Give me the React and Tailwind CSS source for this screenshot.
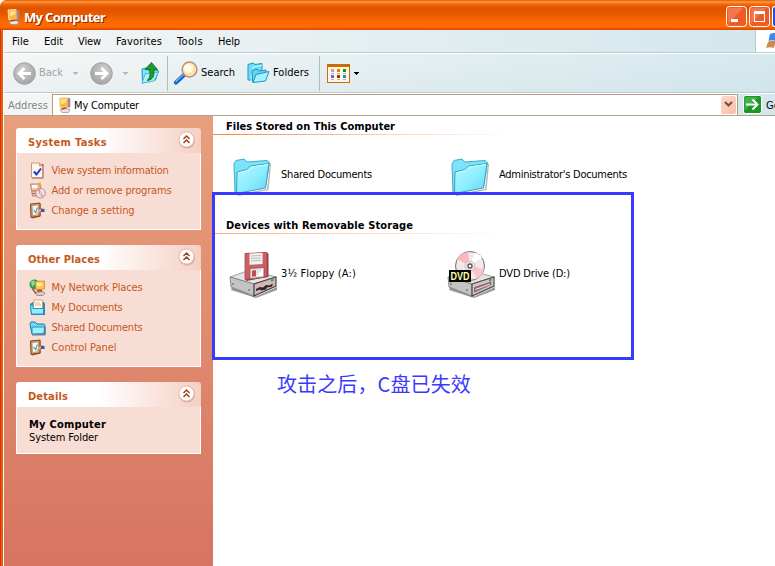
import { useLayoutEffect, useRef, useState } from "react";

// Text whose letter spacing is computed so that the line fills a given width.
function Fit({ w, className = "", children }) {
  const ref = useRef(null);
  const [gap, setGap] = useState(0);
  useLayoutEffect(() => {
    const natural = ref.current.getBoundingClientRect().width;
    setGap((w - natural) / String(children).length);
  }, [w, children]);
  return (
    <span ref={ref} className={"inline-block shrink-0 whitespace-pre " + className} style={{ letterSpacing: gap + "px" }}>
      {children}
    </span>
  );
}

function ComputerIcon() {
  return (
    <svg width="14" height="16" viewBox="0 0 14 16" className="shrink-0">
      <path d="M1 1 9 .5l.5 9.500-7.500 1z" fill="#ffb52e" stroke="#fbe6bd" />
      <path d="M2.500 2.500 8 2v3.500l-5 2z" fill="#ffe08a" />
      <path d="M9.500.500l2.800 1v8.500l-2.800 1z" fill="#a9877d" />
      <path d="M2 13l5-1.500 5 1-1.500 3H4z" fill="#e8e2ea" stroke="#9b8d99" strokeWidth=".7" />
      <path d="M3.500 11.700l5-.7" stroke="#b43c27" strokeWidth="1.600" />
    </svg>
  );
}

function RoundArrow({ flip }) {
  return (
    <svg width="23" height="23" viewBox="0 0 23 23" className={flip ? "shrink-0 -scale-x-100" : "shrink-0"}>
      <defs>
        <radialGradient id={flip ? "rf" : "rb"} cx=".4" cy=".35" r=".7">
          <stop offset="0" stopColor="#d2d2d2" />
          <stop offset="1" stopColor="#a2a2a2" />
        </radialGradient>
      </defs>
      <circle cx="11.5" cy="11.5" r="10.8" fill={flip ? "url(#rf)" : "url(#rb)"} stroke="#a0a0a0" />
      <path d="M18 11.500H6.500M11.500 6l-5.500 5.500 5.500 5.500" fill="none" stroke="#fff" strokeWidth="2.800" />
    </svg>
  );
}

function Caret({ className }) {
  return (
    <svg width="6" height="3" viewBox="0 0 6 3" className={"shrink-0 " + className} shapeRendering="crispEdges">
      <path d="M0 0h6L3 3z" fill="currentColor" />
    </svg>
  );
}

function UpIcon() {
  return (
    <svg width="20" height="23" viewBox="0 0 20 23" className="ml-[12px] shrink-0">
      <path d="M2 7l4-1 1.500 2H16l2.500 1-3 9-13 3z" fill="#7be3fb" stroke="#2393bd" />
      <path d="M2 21 5 12l13.500-2-4.500 9z" fill="#aef3ff" stroke="#39afd5" strokeWidth=".8" />
      <path d="M5 7.500 11.500.500 17.500 7.500h-3.500c.5 6.500-1 10.500-7 11 3-2.500 3.500-5.500 2.500-11z" fill="#1d9c2d" stroke="#08671a" strokeWidth=".8" />
    </svg>
  );
}

function SearchIcon() {
  return (
    <svg width="24" height="24" viewBox="0 0 24 24" className="ml-[6px] shrink-0">
      <path d="M2 21.500 10 14" stroke="#1c5fc4" strokeWidth="4.200" strokeLinecap="round" />
      <path d="M2 20.500 9 14" stroke="#6cb3ff" strokeWidth="1.600" strokeLinecap="round" />
      <circle cx="15.500" cy="8.500" r="7.400" fill="#ffe3a8" stroke="#b59089" strokeWidth="1.500" />
      <circle cx="14.500" cy="7.500" r="4.600" fill="#fffbe6" />
    </svg>
  );
}

function FoldersIcon() {
  return (
    <svg width="23" height="22" viewBox="0 0 23 22" className="ml-[12px] shrink-0">
      <path d="M1 2.500 6 1l2 1.500 7-1v6L4 18H1z" fill="#6fdcf8" stroke="#2192c0" />
      <path d="M4 18 6 5l9-1.500" fill="none" stroke="#c8f8ff" />
      <path d="M5 8.500l5-1.500 2 2 7-1v3L8 20H5.500z" fill="#62d2f3" stroke="#2192c0" />
      <path d="M6 20.500 9 12.500l13-3L18.500 19z" fill="#a5f0ff" stroke="#2496c4" />
    </svg>
  );
}

function ViewsIcon() {
  return (
    <svg width="23" height="19" viewBox="0 0 23 19" className="ml-[7px] shrink-0" shapeRendering="crispEdges">
      <path d="M0 0h23v19H0z" fill="#cf6a06" />
      <path d="M1 3h21v15H1z" fill="#fff7ea" />
      <path d="M4 5h3v3H4z" fill="#d39a9a" />
      <path d="M10 5h3v3h-3z" fill="#e67c00" />
      <path d="M16 5h3v3h-3z" fill="#0a9a0a" />
      <path d="M4 11h3v3H4z" fill="#4a6cff" />
      <path d="M10 11h3v3h-3z" fill="#9a3400" />
      <path d="M16 11h3v3h-3z" fill="#0a9ad0" />
      <path d="M4 9h3v1H4zM10 9h3v1h-3zM16 9h3v1h-3zM4 15h3v1H4zM10 15h3v1h-3zM16 15h3v1h-3z" fill="#b9b2a8" />
    </svg>
  );
}

function TaskIcon({ name }) {
  return (
    <svg width="17" height="17" viewBox="0 0 17 17" className="shrink-0">
      {name === "info" && (
        <g>
          <path d="M4 2h10.500v14.500H3V15z" fill="#8a5f4c" />
          <path d="M2.500 1h8l3 3v11.500h-11z" fill="#fff5e8" stroke="#c99a72" />
          <path d="M10.500 1v3h3" fill="#f0b070" stroke="#c58a50" strokeWidth=".7" />
          <path d="M5 9.500l2.500 3L12 6.500" fill="none" stroke="#1736e8" strokeWidth="2" />
        </g>
      )}
      {name === "programs" && (
        <g>
          <path d="M1.500 2h8l2 2v10h-8z" fill="#efc79f" stroke="#a27a69" strokeWidth=".8" />
          <path d="M3 3h5v3H3z" fill="#fff" />
          <path d="M3 8.500h5v1H3zM3 11h4v1H3z" fill="#b2685a" />
          <path d="M9 1l2.500-.5 1 4-2 1z" fill="#f0a030" />
          <circle cx="11.500" cy="11.200" r="4.800" fill="#f5e3e7" stroke="#9b7980" strokeWidth=".8" />
          <path d="M11.500 11.200 8 8a5 5 0 0 1 3-1.500z" fill="#f08a96" />
          <path d="M11.500 11.200 15 14a5 5 0 0 1-3 1.800z" fill="#f3a0a8" />
          <circle cx="11.500" cy="11.200" r="1.200" fill="#fff" stroke="#9b7980" strokeWidth=".6" />
        </g>
      )}
      {name === "setting" && (
        <g>
          <path d="M2.500 3l9-1.500v13L3 16.500z" fill="#7b5138" />
          <path d="M1.500 2l9.500-1v13l-9 1.500z" fill="#d99458" stroke="#7b4a2b" />
          <path d="M3.500 4l5.500-.6v8.800l-5 .8z" fill="#e9faff" />
          <path d="M4.500 8l2 2.500 2-5" fill="none" stroke="#3aa2b8" strokeWidth="1.100" />
          <path d="M7.500 11.500l3.500-3 2-.5" fill="none" stroke="#eab088" strokeWidth="2" />
          <path d="M12 6.500l3.500.500v3H12z" fill="#3d55a6" />
        </g>
      )}
      {name === "network" && (
        <g>
          <circle cx="5.500" cy="5.500" r="5" fill="#2c9c4c" />
          <path d="M2 3l3-2 1 4-3 3z" fill="#8de08a" />
          <path d="M6.500 2.500l9-.5v8l-8.500.7z" fill="#ffc74c" stroke="#d59a35" />
          <path d="M8 4l5-.3v3L8 7.500z" fill="#ffeaa8" />
          <path d="M8 11l5-.3v2H8z" fill="#a54432" />
          <path d="M6 13.500l8-1 2 1.500-2 2.500H8z" fill="#d8cbd4" stroke="#8b7280" strokeWidth=".7" />
          <path d="M3.500 10l3.500 4.500" stroke="#c64334" strokeWidth="1.300" />
        </g>
      )}
      {name === "docs" && (
        <g>
          <path d="M1 5l3-2h11l1 2v11H2z" fill="#2887b4" />
          <path d="M5 1h8.500v9H4z" fill="#fffaf0" stroke="#c8935f" strokeWidth=".8" />
          <path d="M6 4h5M6 6h6" stroke="#e1a070" strokeWidth=".8" />
          <path d="M1.500 6H4v3.500h10.500V15h-12z" fill="#93edff" stroke="#2796c5" />
        </g>
      )}
      {name === "folder" && (
        <g>
          <path d="M1 5l1-2h4l2 2h7l1 1.500V15H3z" fill="#6fd9f5" stroke="#1a79a8" />
          <path d="M3 15V8h12.500l-.5 6.500z" fill="#9ff0ff" stroke="#2591c1" />
          <path d="M3 16h13V8" fill="none" stroke="#56616a" strokeWidth=".8" />
        </g>
      )}
    </svg>
  );
}

function Panel({ title, tw, height, children }) {
  return (
    <section className={"flex w-[185px] shrink-0 flex-col " + height}>
      <header className="flex h-[25px] shrink-0 items-center justify-between rounded-t-[3px] bg-linear-to-r from-white from-45% to-[#f5cfc3] pr-[6px] pl-3">
        <Fit w={tw} className="pt-[4px] text-[11px] leading-[14px] font-bold text-[#c6581c]">{title}</Fit>
        <svg width="17" height="17" viewBox="0 0 17 17" className="-mt-[2px] overflow-visible">
          <circle cx="9" cy="9.500" r="8" fill="#c98878" opacity=".5" />
          <circle cx="8.500" cy="8.500" r="7.600" fill="#fff" stroke="#e1b5a8" />
          <path d="M5.500 8l3-3 3 3M5.500 12l3-3 3 3" fill="none" stroke="#a5400c" strokeWidth="1.500" />
        </svg>
      </header>
      <div className="flex flex-1 flex-col border border-t-0 border-white bg-[#f8ddd4]">{children}</div>
    </section>
  );
}

function Task({ icon, w, children }) {
  return (
    <div className="flex h-5 items-center gap-[6px] pl-[11.5px]">
      <TaskIcon name={icon} />
      <Fit w={w} className="pt-[2px] text-[11px] leading-[14px] text-[#c6581c]">{children}</Fit>
    </div>
  );
}

function BigFolder() {
  return (
    <svg width="40" height="38" viewBox="0 0 40 38" className="mt-[4px] ml-[3px] shrink-0">
      <defs>
        <linearGradient id="bf" x1="0" y1="0" x2="1" y2="1">
          <stop offset="0" stopColor="#b8faff" />
          <stop offset=".55" stopColor="#8bedff" />
          <stop offset="1" stopColor="#5fd2f6" />
        </linearGradient>
      </defs>
      <path d="M5 36.500 34 31l3-25.500 1 .5-2.500 26L5 38z" fill="#777" opacity=".55" />
      <path d="M1 6 3 2.500 11 1l3 3L34 2.500l2.500 2-4 24-28 7-2.500-1z" fill="#7ce4fa" stroke="#3cacc9" />
      <path d="M3.500 35.500 4 14l10-2.500 3.500-3.500L36 5.500 32.500 30z" fill="url(#bf)" stroke="#36a2c4" />
      <path d="M5 15l10-2.500L18.500 9 35 6.500" fill="none" stroke="#d7fcff" />
    </svg>
  );
}

function DriveBase({ red }) {
  return (
    <g>
      <path d="M3 37l24 9.500L48 37v3L27 48 2 40z" fill="#555" opacity=".6" />
      <path d="M1 27 21 20l26 7-22 7z" fill="#e4e4e4" stroke="#8c8c8c" strokeWidth=".8" />
      <path d="M1 27l24 7v12L2 37z" fill="#c4c4c4" stroke="#777" strokeWidth=".8" />
      <path d="M25 34l22-7v9l-22 10z" fill={red ? "#d8b4b4" : "#cfc3c3"} stroke="#494949" strokeWidth="1.200" />
      {red && <path d="M27 39l4-2 3 .5 3-2.500 3 .5 4-2-1 3-5 1-1 2-5 1-1-1-4 1.500z" fill="#2a2626" />}
      {!red && <path d="M27.500 37.500 44 32v2.500L27.500 42z" fill="#a36a6a" stroke="#555" strokeWidth=".6" />}
      {!red && <path d="M28.500 39.500 43 34" stroke="#efdcdc" strokeWidth="1.200" />}
      <path d="M42 29.500l2.500-.7v2l-2.500.7z" fill="#1fa84c" />
      <circle cx="4" cy="34" r=".8" fill="#444" />
      <circle cx="20" cy="40" r=".8" fill="#444" />
    </g>
  );
}

function FloppyDrive() {
  return (
    <svg width="48" height="49" viewBox="0 0 48 49" className="-ml-px shrink-0">
      <DriveBase red />
      <path d="M16 3.500 38 2.500 39.500 4v23L17 31z" fill="#8f3d42" />
      <path d="M16 3.500 38 2.500v24L16 29.500z" fill="#cc5f65" stroke="#a8464d" strokeWidth=".8" />
      <path d="M20.500 3.500l13-.6V14l-13 .8z" fill="#f4f4f4" />
      <path d="M22 6l10-.5M22 8.500l10-.5M22 11l10-.5" stroke="#a8a8a8" strokeWidth=".8" />
      <path d="M21 18.500l14-1v9.500l-14 1.700z" fill="#e5e2e2" stroke="#8b5254" strokeWidth=".7" />
      <path d="M23 20.500l4-.3v6l-4 .5z" fill="#c7484f" />
      <path d="M28 26l6-8v8z" fill="#fff" />
    </svg>
  );
}

function DvdDrive() {
  return (
    <svg width="48" height="49" viewBox="0 0 48 49" className="-ml-px shrink-0">
      <DriveBase />
      <circle cx="23" cy="16" r="14.500" fill="#f3e8eb" stroke="#6e6e6e" />
      <path d="M23 16 10 9A15 15 0 0 1 21 2z" fill="#fbb9b9" />
      <path d="M23 16l14 3a15 15 0 0 1-7 10z" fill="#fac5c5" />
      <path d="M23 16 28 2.500a15 15 0 0 1 7 5z" fill="#fff" />
      <path d="M23 16l-5 13a15 15 0 0 1-7-5z" fill="#f8d6f5" />
      <circle cx="23" cy="16" r="5" fill="#eedfe2" stroke="#ccb5ba" strokeWidth=".7" />
      <circle cx="23" cy="16" r="2" fill="#fff" stroke="#555" strokeWidth="1.300" />
      <path d="M2 20h22v12H2z" fill="#050500" />
      <text x="13" y="29.500" textAnchor="middle" textLength="19" lengthAdjust="spacingAndGlyphs" fontSize="10" fontWeight="bold" fill="#ffffae" fontFamily="Liberation Sans, sans-serif">DVD</text>
    </svg>
  );
}

function Heading({ w, pale, children }) {
  return (
    <div className="flex h-[19px] w-[296px] flex-col">
      <h2 className="h-[18px] pl-[13px] text-[11px] leading-[21px] font-bold">
        <Fit w={w}>{children}</Fit>
      </h2>
      <div className={pale ? "h-px bg-linear-to-r from-[#f9b07c] to-white" : "h-px bg-linear-to-r from-[#f58634] to-white"} />
    </div>
  );
}

function Item({ icon, w, children }) {
  return (
    <div className="flex w-[218px] items-center">
      <div className="flex w-[51px] shrink-0">{icon}</div>
      <Fit w={w}>{children}</Fit>
    </div>
  );
}

export default function App() {
  return (
    <div className="relative flex h-[566px] w-[775px] flex-col overflow-hidden bg-white font-['DejaVu_Sans_Condensed','DejaVu_Sans',sans-serif] text-[11px] leading-[14px] text-black">
      <div className="flex h-[30px] shrink-0 items-center rounded-tl-[6px] bg-[linear-gradient(#e35a00_0px,#ff9a45_2px,#f06a0a_4px,#df5200_8px,#e85b00_15px,#ff6a00_22px,#ff6b00_27px,#dc4200_30px)] pt-[3px] pl-[7px]">
        <ComputerIcon />
        <Fit w={81} className="ml-[3px] font-['Open_Sans',sans-serif] text-[13px] leading-[18px] font-bold text-white [text-shadow:1px_1px_#8c2b00]">My Computer</Fit>
        <div className="ml-auto flex shrink-0 gap-[2px]">
          <svg width="21" height="21" viewBox="0 0 21 21">
            <rect x=".5" y=".5" width="20" height="20" rx="3" fill="#ef5b28" stroke="#fff" />
            <path d="M2 18V4q0-2 2-2h13z" fill="#fb9166" opacity=".5" />
            <path d="M5 13h7v3H5z" fill="#fff" />
          </svg>
          <svg width="21" height="21" viewBox="0 0 21 21">
            <rect x=".5" y=".5" width="20" height="20" rx="3" fill="#ef5b28" stroke="#fff" />
            <path d="M2 18V4q0-2 2-2h13z" fill="#fb9166" opacity=".5" />
            <path d="M5 5h11v11H5zM6 8v7h9V8z" fill="#fff" fillRule="evenodd" />
          </svg>
          <div className="h-[21px] w-[3px] rounded-l-[3px] border border-r-0 border-white bg-[#2450d8]" />
        </div>
      </div>

      <div className="flex min-h-0 flex-1">
        <div className="w-[4px] shrink-0 bg-[linear-gradient(to_right,#d93400_0px,#d93400_1px,#f06010_1px,#f06010_2px,#e25a10_2px,#e25a10_3px,#fff_3px)]" />
        <div className="flex min-w-0 flex-1 flex-col">
          <div className="flex flex-col bg-linear-to-r from-[#f5f5f4] to-[#d2e7ec]">
            <nav className="flex h-[23px] items-center border-b border-[#b5ccd6] pl-[8px]">
              <Fit w={17} className="pt-[2px]">File</Fit>
              <Fit w={19} className="ml-[15px] pt-[2px]">Edit</Fit>
              <Fit w={23} className="ml-[15px] pt-[2px]">View</Fit>
              <Fit w={46} className="ml-[15px] pt-[2px]">Favorites</Fit>
              <Fit w={26} className="ml-[15px] pt-[2px]">Tools</Fit>
              <Fit w={22} className="ml-[15px] pt-[2px]">Help</Fit>
              <div className="ml-auto flex h-[22px] w-[20px] items-center overflow-hidden border-l border-[#b5ccd6] bg-white pl-[10px]">
                <svg width="18" height="16" viewBox="0 0 18 16" className="shrink-0">
                  <path d="M4 1q4-2 8 0l-2 7q-4-1.500-7.500 0z" fill="#3f86ee" />
                  <path d="M2 9q4-2 7.500-.500L8 15q-4-1.500-8 0z" fill="#d08a4c" />
                </svg>
              </div>
            </nav>
            <div className="flex h-[40px] items-center border-t border-b border-t-white border-b-[#b5ccd6] bg-linear-to-b from-white/10 to-[#c9dfe4]/20 pl-[9px]">
              <RoundArrow />
              <Fit w={24} className="ml-[3px] text-[#9aa5a8]">Back</Fit>
              <Caret className="ml-[9px] text-[#aebabd]" />
              <div className="ml-[12px] flex"><RoundArrow flip /></div>
              <Caret className="ml-[9px] text-[#aebabd]" />
              <UpIcon />
              <div className="ml-[7px] h-[35px] w-px shrink-0 bg-[#a9bfc6]" />
              <SearchIcon />
              <Fit w={34} className="ml-[3px]">Search</Fit>
              <FoldersIcon />
              <Fit w={36} className="ml-[3px]">Folders</Fit>
              <div className="ml-[10px] h-[35px] w-px shrink-0 bg-[#a9bfc6]" />
              <ViewsIcon />
              <Caret className="ml-[3px] text-black" />
            </div>
            <div className="flex h-[23px] items-center overflow-hidden border-t border-b border-t-white border-b-[#b5a08e]">
              <Fit w={40} className="ml-[4px] pt-[2px] text-[#7d8789]">Address</Fit>
              <div className="ml-[4px] flex h-[22px] w-[686px] shrink-0 items-center border border-[#bb9a7c] bg-white pr-px pl-[5px]">
                <ComputerIcon />
                <Fit w={65} className="ml-[2px] pt-[2px]">My Computer</Fit>
                <div className="ml-auto flex h-[18px] w-[15px] shrink-0 items-center justify-center rounded-[2px] bg-linear-to-br from-[#fbdacb] to-[#f5bfa8]">
                  <svg width="9" height="7" viewBox="0 0 9 7"><path d="M1 1l3.500 3.500L8 1" fill="none" stroke="#7d4c3b" strokeWidth="2.200" /></svg>
                </div>
              </div>
              <svg width="19" height="19" viewBox="0 0 19 19" className="ml-[5px] shrink-0">
                <rect x=".5" y=".5" width="18" height="18" rx="2" fill="#1d9528" stroke="#fff" />
                <path d="M1.500 16V2h14z" fill="#67c96b" opacity=".5" />
                <path d="M3 9.500h11M9.500 4.500l5 5-5 5" fill="none" stroke="#fff" strokeWidth="2" />
              </svg>
              <Fit w={14} className="ml-[4px] pt-[2px]">Go</Fit>
            </div>
          </div>

          <div className="flex min-h-0 flex-1">
            <aside className="flex w-[209px] shrink-0 flex-col gap-[15px] bg-linear-to-b from-[#e7a07b] to-[#d67461] pt-[12px] pl-[12px]">
              <Panel title="System Tasks" tw={79} height="h-[102px]">
                <div className="pt-[7px]">
                  <Task icon="info" w={117}>View system information</Task>
                  <Task icon="programs" w={120}>Add or remove programs</Task>
                  <Task icon="setting" w={83}>Change a setting</Task>
                </div>
              </Panel>
              <Panel title="Other Places" tw={72} height="h-[122px]">
                <div className="pt-[7px]">
                  <Task icon="network" w={91}>My Network Places</Task>
                  <Task icon="docs" w={71}>My Documents</Task>
                  <Task icon="folder" w={91}>Shared Documents</Task>
                  <Task icon="setting" w={65}>Control Panel</Task>
                </div>
              </Panel>
              <Panel title="Details" tw={40} height="h-[72px]">
                <div className="flex flex-col items-start pt-[11px] pl-3 leading-[13px]">
                  <Fit w={77} className="font-bold">My Computer</Fit>
                  <Fit w={69}>System Folder</Fit>
                </div>
              </Panel>
            </aside>

            <main className="flex min-w-0 flex-1 flex-col">
              <Heading w={169}>Files Stored on This Computer</Heading>
              <div className="flex h-[80px] items-center pl-[17px]">
                <Item icon={<BigFolder />} w={91}>Shared Documents</Item>
                <Item icon={<BigFolder />} w={128}>Administrator's Documents</Item>
              </div>
              <Heading w={187} pale>Devices with Removable Storage</Heading>
              <div className="flex h-[80px] items-center pl-[17px]">
                <Item icon={<FloppyDrive />} w={75}>3½ Floppy (A:)</Item>
                <Item icon={<DvdDrive />} w={71}>DVD Drive (D:)</Item>
              </div>
              <p className="mt-[55px] ml-[64px] font-['Noto_Sans_CJK_SC',sans-serif] text-[20px] leading-[30px] text-[#3a3aff]">
                <Fit w={194}>攻击之后，C盘已失效</Fit>
              </p>
            </main>
          </div>
        </div>
      </div>

      {/* Highlight frame drawn over the storage section */}
      <div className="absolute top-[192px] left-[212px] h-[168px] w-[422px] border-3 border-[#3a3aff]" />
    </div>
  );
}
